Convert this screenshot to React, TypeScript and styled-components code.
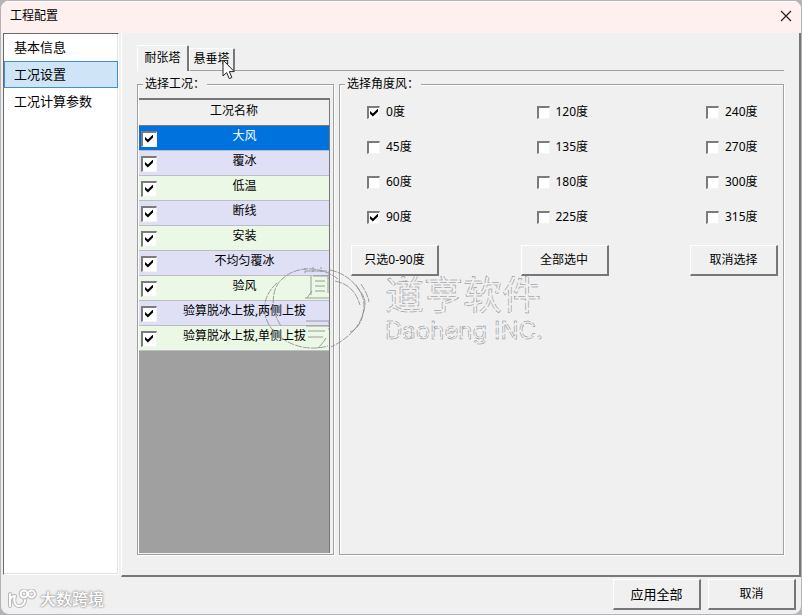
import React, { useState } from "react";
import styled, { createGlobalStyle, css } from "styled-components";

const GlobalStyle = createGlobalStyle`
  * { box-sizing: border-box; }
  body {
    margin: 0;
    background: #b4b4b6;
    color: #000;
    font-family: "Noto Sans", "Noto Sans CJK SC", sans-serif;
    font-size: 12px;
    line-height: 16px;
  }
  button, input { font: inherit; color: inherit; }
`;

const Dialog = styled.div`
  position: relative;
  display: flex;
  flex-direction: column;
  min-height: 100vh;
  border: 1px solid #b4b4b6;
  border-radius: 9px;
  background: #f0f0f0;
  overflow: hidden;
`;

const TitleBar = styled.header`
  display: flex;
  align-items: center;
  justify-content: space-between;
  height: 32px;
  padding: 0 9px 4px;
  background: #fdf0ef;
  border-top: 1px solid #fff;
`;

const Title = styled.h1`
  margin: 0;
  font-size: 12px;
  font-weight: 400;
`;

const CloseButton = styled.button`
  display: flex;
  padding: 0;
  border: 0;
  background: none;
`;

const Main = styled.div`
  flex: 1;
  display: flex;
  gap: 2px;
  padding-left: 2px;
`;

const Sidebar = styled.nav`
  width: 116px;
  margin-bottom: 2px;
  background: #fff;
  border: 1px solid #fff;
  border-top-color: #696969;
  border-left-color: #696969;
  box-shadow: inset -1px -1px #e3e3e3;
`;

const SideItem = styled.a<{ $active?: boolean }>`
  display: block;
  height: 27px;
  padding: 4px 9px;
  border: 1px solid transparent;
  color: #000;
  font-size: 13px;
  text-decoration: none;
  ${(p) => p.$active && css`
    background: #cfe4f7;
    border-color: #3f8fd2;
  `}
`;

const Panel = styled.main`
  flex: 1;
  display: flex;
  flex-direction: column;
  padding: 12px 15px 20px;
  border-left: 1px solid #fff;
  border-right: 2px solid #77777a;
  border-bottom: 2px solid #77777a;
`;

const TabList = styled.div`
  display: flex;
  align-items: flex-end;
  height: 26px;
  box-shadow: inset 0 -1px #a0a0a0;
`;

const Tab = styled.button<{ $active?: boolean }>`
  height: ${(p) => (p.$active ? 26 : 23)}px;
  width: ${(p) => (p.$active ? 52 : 46)}px;
  padding: 0 0 2px;
  background: #f0f0f0;
  border: 1px solid #fff;
  border-right: 2px solid #77777a;
  border-bottom: ${(p) => (p.$active ? "0" : "1px solid #a0a0a0")};
  border-radius: 2px 2px 0 0;
`;

const Groups = styled.div`
  flex: 1;
  display: flex;
  gap: 5px;
  padding-top: 5px;
`;

const Group = styled.fieldset<{ $fixed?: boolean }>`
  ${(p) => (p.$fixed ? "width: 197px;" : "flex: 1;")}
  display: flex;
  flex-direction: column;
  min-width: 0;
  margin: 0;
  padding: 0;
  border: 1px solid #a0a0a0;
  box-shadow: 1px 1px #fff, inset 1px 1px #fff;
`;

const Legend = styled.legend`
  margin-left: 5px;
  padding: 0 2px;
  background: #f0f0f0;
`;

const GridView = styled.div`
  flex: 1;
  margin: 6px 3px 1px 1px;
  background: #a0a0a0;
  border-top: 2px solid #77777a;
  border-right: 1px solid #77777a;
`;

const CaseTable = styled.table`
  width: 100%;
  border-collapse: separate;
  border-spacing: 0;
  text-align: center;
`;

const HeadCell = styled.th`
  height: 26px;
  padding: 0 0 3px;
  background: #f0f0f0;
  border-bottom: 1px solid #77777a;
  font-weight: 400;
`;

const CaseRow = styled.tr<{ $tone: "selected" | "lavender" | "green" }>`
  background: ${(p) => ({ selected: "#0072de", lavender: "#dfdff6", green: "#ebf8e6" })[p.$tone]};
  color: ${(p) => (p.$tone === "selected" ? "#fff" : "#000")};
`;

const CheckCell = styled.td`
  width: 21px;
  height: 25px;
  padding: 1px 0 0 2px;
  border-bottom: 1px solid #bdbdc6;
`;

const NameCell = styled.td`
  height: 25px;
  padding: 0 0 5px;
  border-bottom: 1px solid #bdbdc6;
`;

const Check = styled.input.attrs({ type: "checkbox" })<{ $large?: boolean }>`
  appearance: none;
  position: relative;
  flex: none;
  display: block;
  width: ${(p) => (p.$large ? 16 : 13)}px;
  height: ${(p) => (p.$large ? 16 : 13)}px;
  margin: 0;
  background: #fff;
  border: 1px solid #f4f4f4;
  border-top: 2px solid #7b7b7b;
  border-left: 2px solid #7b7b7b;
  &:checked::after {
    content: "";
    position: absolute;
    left: ${(p) => (p.$large ? 2 : 1)}px;
    top: ${(p) => (p.$large ? 2 : 1)}px;
    width: 8px;
    height: 8px;
    background: #000;
    clip-path: polygon(0 30%, 36% 62%, 100% 0, 100% 38%, 36% 100%, 0 66%);
  }
`;

const Angles = styled.div`
  display: grid;
  grid-template-columns: 1fr 1fr 88px;
  row-gap: 1px;
  padding: 3px 5px 0 11px;
`;

const AngleLabel = styled.label`
  display: flex;
  align-items: center;
  gap: 6px;
  height: 34px;
  padding-left: 16px;
`;

const PushButton = styled.button<{ $big?: boolean }>`
  width: 88px;
  height: 31px;
  padding: 0;
  background: #f0f0f0;
  border: 1px solid #fff;
  border-right: 2px solid #77777a;
  border-bottom: 2px solid #77777a;
  font-size: ${(p) => (p.$big ? 13 : 12)}px;
`;

const ActionRow = styled.div`
  display: grid;
  grid-template-columns: 1fr 1fr 88px;
  padding: 11px 5px 0 11px;
`;

const Footer = styled.footer`
  display: flex;
  align-items: center;
  justify-content: flex-end;
  gap: 7px;
  height: 37px;
  padding: 0 5px 2px 7px;
`;

const Brand = styled.div`
  display: flex;
  align-items: center;
  gap: 3px;
  margin-right: auto;
  padding-top: 8px;
  color: #fff;
  font-size: 16px;
  font-weight: 500;
  text-shadow: 0 0 1px #999, 0 0 2px #999, 0 0 3px #aaa;
`;

const Watermark = styled.svg`
  position: absolute;
  left: 261px;
  top: 263px;
  pointer-events: none;
`;

const Pointer = styled.svg`
  position: absolute;
  left: 221px;
  top: 58px;
  pointer-events: none;
`;

const cases = ["大风", "覆冰", "低温", "断线", "安装", "不均匀覆冰", "验风", "验算脱冰上拔,两侧上拔", "验算脱冰上拔,单侧上拔"];
const angles = [0, 120, 240, 45, 135, 270, 60, 180, 300, 90, 225, 315];

export default function App() {
  const [enabled, setEnabled] = useState<string[]>(cases);
  const [picked, setPicked] = useState<number[]>([0, 90]);
  const toggle = <T,>(list: T[], value: T) =>
    list.includes(value) ? list.filter((v) => v !== value) : [...list, value];

  return (
    <>
      <GlobalStyle />
      <Dialog role="dialog" aria-labelledby="dialog-title">
        <TitleBar>
          <Title id="dialog-title">工程配置</Title>
          <CloseButton aria-label="关闭">
            <svg width="12" height="12" viewBox="0 0 12 12" stroke="#222" strokeWidth="1.2">
              <path d="M1 1 11 11M11 1 1 11" />
            </svg>
          </CloseButton>
        </TitleBar>

        <Main>
          <Sidebar>
            <SideItem href="#info">基本信息</SideItem>
            <SideItem href="#cases" $active aria-current="page">工况设置</SideItem>
            <SideItem href="#params">工况计算参数</SideItem>
          </Sidebar>

          <Panel>
            <TabList role="tablist">
              <Tab role="tab" aria-selected="true" $active>耐张塔</Tab>
              <Tab role="tab" aria-selected="false">悬垂塔</Tab>
            </TabList>
            <Groups>
              <Group $fixed>
                <Legend>选择工况：</Legend>
                <GridView>
                  <CaseTable>
                    <thead>
                      <tr><HeadCell colSpan={2}>工况名称</HeadCell></tr>
                    </thead>
                    <tbody>
                      {cases.map((name, i) => (
                        <CaseRow key={name} $tone={i === 0 ? "selected" : i % 2 ? "lavender" : "green"}>
                          <CheckCell>
                            <Check
                              $large
                              aria-label={name}
                              checked={enabled.includes(name)}
                              onChange={() => setEnabled(toggle(enabled, name))}
                            />
                          </CheckCell>
                          <NameCell>{name}</NameCell>
                        </CaseRow>
                      ))}
                    </tbody>
                  </CaseTable>
                </GridView>
              </Group>

              <Group>
                <Legend>选择角度风：</Legend>
                <Angles>
                  {angles.map((a) => (
                    <AngleLabel key={a}>
                      <Check checked={picked.includes(a)} onChange={() => setPicked(toggle(picked, a))} />
                      <span>{a}度</span>
                    </AngleLabel>
                  ))}
                </Angles>
                <ActionRow>
                  <PushButton onClick={() => setPicked([0, 90])}>只选0-90度</PushButton>
                  <PushButton onClick={() => setPicked(angles)}>全部选中</PushButton>
                  <PushButton onClick={() => setPicked([])}>取消选择</PushButton>
                </ActionRow>
              </Group>
            </Groups>
          </Panel>
        </Main>

        <Footer>
          <Brand>
            <svg width="29" height="20" viewBox="0 0 29 20" fill="none" strokeLinecap="round">
              {["#b8b8b8", "#fff"].map((c, i) => (
                <g key={c} stroke={c} strokeWidth={i ? 2 : 4}>
                  <path d="M2 5v12M2 11c1-3 3-4 5-4M7 7c-2 5 0 10 4 10 4 0 6-3 6-6" />
                  <circle cx="16" cy="5" r="3.4" />
                  <circle cx="23.5" cy="5" r="3.4" />
                </g>
              ))}
            </svg>
            <span>大数跨境</span>
          </Brand>
          <PushButton $big>应用全部</PushButton>
          <PushButton>取消</PushButton>
        </Footer>

        <Watermark width="290" height="90" viewBox="0 0 290 90" fill="none" stroke="#858589" strokeWidth="0.8">
          <g strokeDasharray="7 1">
            <path d="M76 15C59 2 35 1 20 15C8 26 9 47 19 62M15 19C-2 34-2 57 17 72C33 85 52 86 66 82" />
            <path d="M68 6C83 9 96 20 101 34C106 53 92 72 69 83M73 17C87 20 94 28 98 41M94 21C101 32 106 34 101 50C99 60 94 66 88 68M99 20C102 25 106 31 107 38" />
          </g>
          <path d="M43 7h22M43 34h25M49 12v19M51 12h15v17M53 17h10M53 22h10M53 27h10M45 34l5-7M44 57h24M46 67h17M46 73h15M44 62h23M64 74c-3 5-6 8-8 10" />
          <path d="M43 4v5M51 3v5M59 3v5M67 7v8M67 58v8" strokeDasharray="2 1" />
          <g strokeWidth="0.5" strokeDasharray="7 2">
            <text x="123" y="45" fontFamily="Noto Sans CJK SC, sans-serif" fontSize="39">道亨软件</text>
            <text x="123" y="75" fontFamily="Inter, sans-serif" fontSize="24">Daoheng INC.</text>
          </g>
        </Watermark>

        <Pointer width="14" height="21" viewBox="0 0 14 21">
          <path d="M1 1v16l3.6-3.4 2.7 6 2.6-1.1L7.3 12.6h5Z" fill="#fff" stroke="#222" strokeWidth="1" />
        </Pointer>
      </Dialog>
    </>
  );
}
